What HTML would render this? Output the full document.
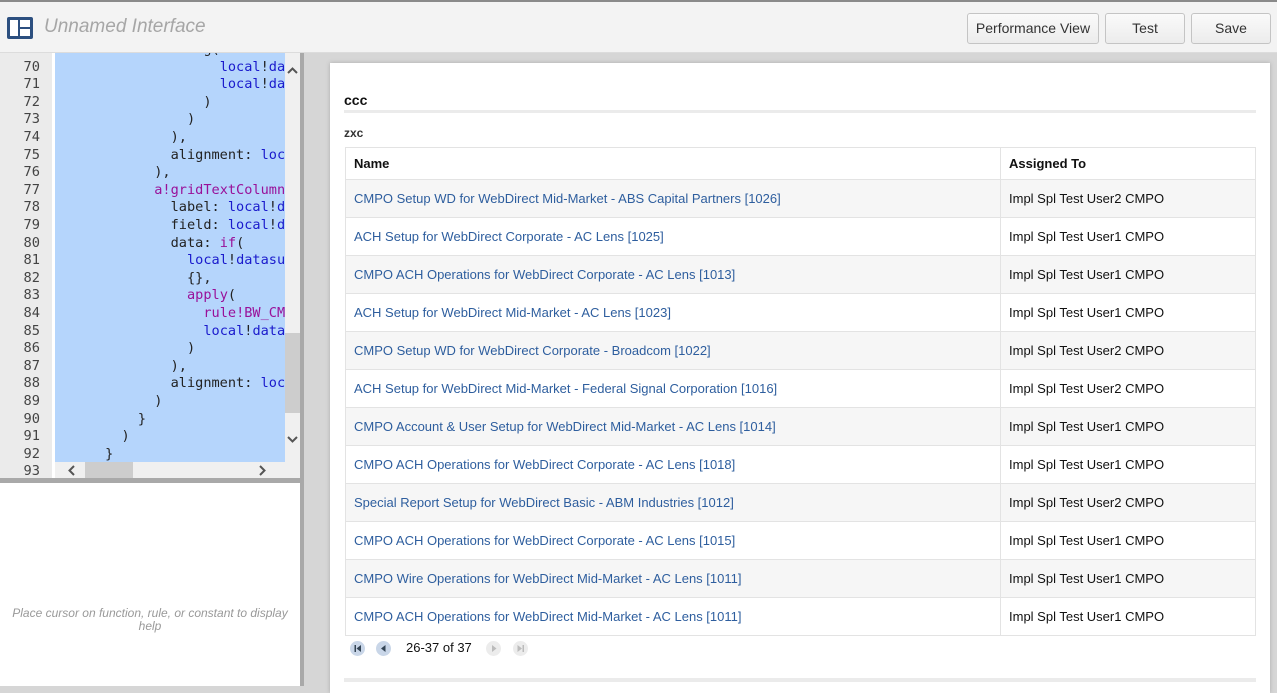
<!DOCTYPE html>
<html><head><meta charset="utf-8"><style>
*{box-sizing:border-box;margin:0;padding:0}
body{width:1277px;height:686px;overflow:hidden;background:#d6d6d6;font-family:"Liberation Sans",Arial,sans-serif;position:relative}
.top{position:absolute;left:0;top:0;width:1277px;height:53px;background:#f3f3f3;border-top:2px solid #8a8a8a;border-bottom:1px solid #dcdcdc}
.title{position:absolute;left:44px;top:14px;font-style:italic;font-size:19px;color:#a6a6a6}
.btn{position:absolute;top:11px;height:31px;border:1px solid #c4c4c4;border-radius:3px;background:linear-gradient(#fafafa,#ececec);font-size:14px;color:#333;text-align:center;line-height:29px}
.left{position:absolute;left:0;top:53px;width:300px;height:633px;background:#fff}
.gut{position:absolute;left:0;top:0;width:52px;height:425px;background:#ebebeb}
.code{position:absolute;left:55px;top:0;width:230px;height:409px;background:#b5d5fc;overflow:hidden}
.ln{position:absolute;left:0;width:40px;text-align:right;font:13.7px "DejaVu Sans Mono",monospace;color:#444;line-height:17.6px}
.cl{position:absolute;left:1px;font:13.6px "DejaVu Sans Mono",monospace;white-space:pre;color:#222;line-height:17.6px}
.k{color:#1a1acc}.p{color:#991199}
.vs{position:absolute;left:285px;top:0;width:15px;height:425px;background:#f0f0f0}
.hs{position:absolute;left:55px;top:409px;width:230px;height:16px;background:#f0f0f0}
.sep{position:absolute;left:0;top:425px;width:303px;height:5px;background:#a9a9a9}
.vsep{position:absolute;left:300px;top:53px;width:4px;height:633px;background:#a9a9a9}
.help{position:absolute;left:0;top:554px;width:300px;text-align:center;font-size:12px;font-style:italic;color:#999;line-height:13px}
.panel{position:absolute;left:330px;top:63px;width:940px;height:630px;background:#fff;box-shadow:0 0 4px #aaa}
table{position:absolute;left:15px;top:84px;width:911px;border-collapse:collapse;font-size:13px}
td,th{border:1px solid #e3e3e3;height:38px;padding:0 8px;text-align:left}
th{height:32px;font-weight:bold;color:#111}
td.a{color:#2e5e9e}td.b{color:#111}
tr:nth-child(even) td{background:#f6f6f6}
.pg{position:absolute;width:15px;height:15px;border-radius:50%;top:578px}
</style></head><body>
<div class="top">
<svg style="position:absolute;left:6px;top:14px" width="28" height="24" viewBox="0 0 28 24"><rect x="1" y="1" width="26" height="22" rx="2" fill="#2c4f7f"/><rect x="4" y="4" width="8" height="16" fill="#fff"/><rect x="14" y="4" width="10" height="7" fill="#fff"/><rect x="14" y="13" width="10" height="7" fill="#fff"/></svg>
<div class="title">Unnamed Interface</div>
<div class="btn" style="left:967px;width:132px">Performance View</div>
<div class="btn" style="left:1105px;width:80px">Test</div>
<div class="btn" style="left:1191px;width:80px">Save</div>
</div>
<div class="left">
<div class="gut"></div>
<div class="code">
<div class="cl" style="top:-12px">                  g(</div>
<div class="cl" style="top:5.6px">                    <span class="k">local</span>!<span class="k">da</span></div>
<div class="cl" style="top:23.2px">                    <span class="k">local</span>!<span class="k">da</span></div>
<div class="cl" style="top:40.8px">                  )</div>
<div class="cl" style="top:58.4px">                )</div>
<div class="cl" style="top:76px">              ),</div>
<div class="cl" style="top:93.6px">              alignment: <span class="k">loc</span></div>
<div class="cl" style="top:111.2px">            ),</div>
<div class="cl" style="top:128.8px">            <span class="p">a!gridTextColumn</span></div>
<div class="cl" style="top:146.4px">              label: <span class="k">local</span>!<span class="k">d</span></div>
<div class="cl" style="top:164px">              field: <span class="k">local</span>!<span class="k">d</span></div>
<div class="cl" style="top:181.6px">              data: <span class="p">if</span>(</div>
<div class="cl" style="top:199.2px">                <span class="k">local</span>!<span class="k">datasu</span></div>
<div class="cl" style="top:216.8px">                {},</div>
<div class="cl" style="top:234.4px">                <span class="p">apply</span>(</div>
<div class="cl" style="top:252px">                  <span class="p">rule!BW_CM</span></div>
<div class="cl" style="top:269.6px">                  <span class="k">local</span>!<span class="k">data</span></div>
<div class="cl" style="top:287.2px">                )</div>
<div class="cl" style="top:304.8px">              ),</div>
<div class="cl" style="top:322.4px">              alignment: <span class="k">loc</span></div>
<div class="cl" style="top:340px">            )</div>
<div class="cl" style="top:357.6px">          }</div>
<div class="cl" style="top:375.2px">        )</div>
<div class="cl" style="top:392.8px">      }</div>
</div>
<div style="position:absolute;left:0;top:5.6px">
<div class="ln" style="top:0">70</div><div class="ln" style="top:17.6px">71</div><div class="ln" style="top:35.2px">72</div><div class="ln" style="top:52.8px">73</div><div class="ln" style="top:70.4px">74</div><div class="ln" style="top:88px">75</div><div class="ln" style="top:105.6px">76</div><div class="ln" style="top:123.2px">77</div><div class="ln" style="top:140.8px">78</div><div class="ln" style="top:158.4px">79</div><div class="ln" style="top:176px">80</div><div class="ln" style="top:193.6px">81</div><div class="ln" style="top:211.2px">82</div><div class="ln" style="top:228.8px">83</div><div class="ln" style="top:246.4px">84</div><div class="ln" style="top:264px">85</div><div class="ln" style="top:281.6px">86</div><div class="ln" style="top:299.2px">87</div><div class="ln" style="top:316.8px">88</div><div class="ln" style="top:334.4px">89</div><div class="ln" style="top:352px">90</div><div class="ln" style="top:369.6px">91</div><div class="ln" style="top:387.2px">92</div><div class="ln" style="top:404.8px">93</div>
</div>
<div class="vs"><div style="position:absolute;left:0;top:280px;width:15px;height:80px;background:#cdcdcd"></div>
<svg style="position:absolute;left:2px;top:14px" width="11" height="8"><path d="M1 6 L5.5 1.5 L10 6" stroke="#555" stroke-width="2" fill="none"/></svg>
<svg style="position:absolute;left:2px;top:382px" width="11" height="8"><path d="M1 2 L5.5 6.5 L10 2" stroke="#555" stroke-width="2" fill="none"/></svg></div>
<div class="hs"><div style="position:absolute;left:30px;top:0;width:48px;height:16px;background:#cdcdcd"></div>
<svg style="position:absolute;left:13px;top:3px" width="8" height="11"><path d="M6 1 L1.5 5.5 L6 10" stroke="#555" stroke-width="2" fill="none"/></svg>
<svg style="position:absolute;left:203px;top:3px" width="8" height="11"><path d="M2 1 L6.5 5.5 L2 10" stroke="#555" stroke-width="2" fill="none"/></svg></div>
<div class="sep"></div>
<div class="help">Place cursor on function, rule, or constant to display<br>help</div>
</div>
<div class="vsep"></div>
<div class="panel">
<div style="position:absolute;left:14px;top:29px;font-size:14px;font-weight:bold;color:#111">ccc</div>
<div style="position:absolute;left:14px;top:47px;width:912px;height:3px;background:#ebebeb"></div>
<div style="position:absolute;left:14px;top:63px;font-size:12px;font-weight:bold;color:#333">zxc</div>
<table>
<tr><th style="width:655px">Name</th><th>Assigned To</th></tr>
<tr><td class="a">CMPO Setup WD for WebDirect Mid-Market - ABS Capital Partners [1026]</td><td class="b">Impl Spl Test User2 CMPO</td></tr>
<tr><td class="a">ACH Setup for WebDirect Corporate - AC Lens [1025]</td><td class="b">Impl Spl Test User1 CMPO</td></tr>
<tr><td class="a">CMPO ACH Operations for WebDirect Corporate - AC Lens [1013]</td><td class="b">Impl Spl Test User1 CMPO</td></tr>
<tr><td class="a">ACH Setup for WebDirect Mid-Market - AC Lens [1023]</td><td class="b">Impl Spl Test User1 CMPO</td></tr>
<tr><td class="a">CMPO Setup WD for WebDirect Corporate - Broadcom [1022]</td><td class="b">Impl Spl Test User2 CMPO</td></tr>
<tr><td class="a">ACH Setup for WebDirect Mid-Market - Federal Signal Corporation [1016]</td><td class="b">Impl Spl Test User2 CMPO</td></tr>
<tr><td class="a">CMPO Account &amp; User Setup for WebDirect Mid-Market - AC Lens [1014]</td><td class="b">Impl Spl Test User1 CMPO</td></tr>
<tr><td class="a">CMPO ACH Operations for WebDirect Corporate - AC Lens [1018]</td><td class="b">Impl Spl Test User1 CMPO</td></tr>
<tr><td class="a">Special Report Setup for WebDirect Basic - ABM Industries [1012]</td><td class="b">Impl Spl Test User2 CMPO</td></tr>
<tr><td class="a">CMPO ACH Operations for WebDirect Corporate - AC Lens [1015]</td><td class="b">Impl Spl Test User1 CMPO</td></tr>
<tr><td class="a">CMPO Wire Operations for WebDirect Mid-Market - AC Lens [1011]</td><td class="b">Impl Spl Test User1 CMPO</td></tr>
<tr><td class="a">CMPO ACH Operations for WebDirect Mid-Market - AC Lens [1011]</td><td class="b">Impl Spl Test User1 CMPO</td></tr>
</table>
<div class="pg" style="left:20px;background:#c9d6e8"><svg width="15" height="15"><rect x="4.5" y="4" width="1.5" height="7" fill="#345"/><path d="M11 4 L6.5 7.5 L11 11Z" fill="#345"/></svg></div>
<div class="pg" style="left:46px;background:#c9d6e8"><svg width="15" height="15"><path d="M9.5 4 L5 7.5 L9.5 11Z" fill="#345"/></svg></div>
<div style="position:absolute;left:76px;top:577px;font-size:13px;color:#111">26-37 of 37</div>
<div class="pg" style="left:156px;background:#ececec"><svg width="15" height="15"><path d="M6 4 L10.5 7.5 L6 11Z" fill="#bbb"/></svg></div>
<div class="pg" style="left:183px;background:#ececec"><svg width="15" height="15"><path d="M4.5 4 L9 7.5 L4.5 11Z" fill="#bbb"/><rect x="9.5" y="4" width="1.5" height="7" fill="#bbb"/></svg></div>
<div style="position:absolute;left:14px;top:615px;width:912px;height:4px;background:#ebebeb"></div>
</div>
</body></html>
